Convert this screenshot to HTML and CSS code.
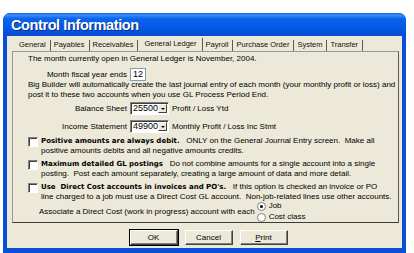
FILE: index.html
```html
<!DOCTYPE html>
<html lang="en">
<head>
    <meta charset="UTF-8">
    <title>Control Information</title>
    <link rel="stylesheet" href="styles.css">
</head>
<body>
    <div class="window">
        <div class="titlebar">Control Information</div>
        <div class="frame">
            <!-- Tabs -->
            <div class="tabs">
                <span class="tab">General</span>
                <span class="tab">Payables</span>
                <span class="tab">Receivables</span>
                <span class="tab active">General Ledger</span>
                <span class="tab">Payroll</span>
                <span class="tab">Purchase Order</span>
                <span class="tab">System</span>
                <span class="tab">Transfer</span>
            </div>

            <!-- General Ledger panel -->
            <div class="panel">
                <p class="line">The month currently open in General Ledger is November, 2004.</p>

                <div class="field fiscal">
                    <span class="label">Month fiscal year ends</span>
                    <span class="textbox small">12</span>
                </div>

                <p class="line">Big Builder will automatically create the last journal entry of each month (your monthly profit or loss) and<br>post it to these two accounts when you use GL Process Period End.</p>

                <div class="field balance">
                    <span class="label">Balance Sheet</span>
                    <span class="combo"><span class="combo-value">25500</span><span class="combo-btn"></span></span>
                    <span class="after">Profit / Loss Ytd</span>
                </div>

                <div class="field income">
                    <span class="label">Income Statement</span>
                    <span class="combo"><span class="combo-value">49900</span><span class="combo-btn"></span></span>
                    <span class="after">Monthly Profit / Loss Inc Stmt</span>
                </div>

                <div class="option first">
                    <span class="checkbox"></span>
                    <p class="option-text"><b>Positive amounts are always debit.</b>&nbsp;&nbsp; ONLY on the General Journal Entry screen.&nbsp; Make all<br>positive amounts debits and all negative amounts credits.</p>
                </div>

                <div class="option">
                    <span class="checkbox"></span>
                    <p class="option-text"><b>Maximum detailed GL postings</b>&nbsp;&nbsp; Do not combine amounts for a single account into a single<br>posting.&nbsp; Post each amount separately, creating a large amount of data and more detail.</p>
                </div>

                <div class="option">
                    <span class="checkbox"></span>
                    <p class="option-text"><b>Use&nbsp; Direct Cost accounts in invoices and PO's.</b>&nbsp;&nbsp; If this option is checked an invoice or PO<br>line charged to a job must use a Direct Cost GL account.&nbsp; Non-job-related lines use other accounts.</p>
                </div>

                <div class="associate">
                    <span class="associate-text">Associate a Direct Cost (work in progress) account with each</span>
                    <div class="radios">
                        <label class="radio-row"><span class="radio checked"></span>Job</label>
                        <label class="radio-row"><span class="radio"></span>Cost class</label>
                    </div>
                </div>
            </div>

            <!-- Dialog buttons -->
            <div class="buttons">
                <button class="btn default">OK</button>
                <button class="btn">Cancel</button>
                <button class="btn"><u>P</u>rint</button>
            </div>
        </div>
    </div>
</body>
</html>
```

FILE: styles.css
```css
body {
    margin: 0;
    background: white;
    font-family: "Liberation Sans", Arial, sans-serif;
    font-size: 8px;
    color: black;
    overflow: hidden;
}

.window {
    margin: 13px 0 0 3px;
    width: 403px;
    height: 240px;
    border-radius: 7px 7px 0 0;
    background: #0a4fd8;
    display: flex;
    flex-direction: column;
    box-sizing: border-box;
    padding: 0 4px 5px 4px;
}

.titlebar {
    height: 23px;
    margin: 0 -4px;
    padding-left: 8px;
    border-radius: 7px 7px 0 0;
    background: linear-gradient(to bottom, #0a5ce8 0%, #3d8ef9 8%, #0b63ec 25%, #0458e4 70%, #0a4ad0 100%);
    color: white;
    font-size: 14.5px;
    font-weight: bold;
    letter-spacing: -0.4px;
    line-height: 24px;
    text-shadow: 1px 1px 0 #0a2a80;
}

.frame {
    flex: 1;
    background: #ece9d8;
    display: flex;
    flex-direction: column;
    padding: 2px 3px 0 5px;
}

.tabs {
    display: flex;
    height: 13px;
    padding-left: 4px;
    align-items: flex-end;
}

.tab {
    padding: 0 4px 1px 3px;
    border-right: 1px solid #5a5a5a;
    line-height: 10px;
    font-size: 7.5px;
    color: #111;
}

.tab.active {
    padding: 0 5px 2px 6px;
    line-height: 11px;
}

.panel {
    height: 172px;
    border: 1px solid #919b9c;
    border-bottom-color: #3c3c3c;
    border-right-color: #5a5a5a;
    padding: 2px 0 0 15px;
    box-sizing: border-box;
}

.line {
    margin: 0;
    line-height: 10px;
}

.field {
    display: flex;
    align-items: center;
    gap: 3px;
}

.field .label {
    width: 99px;
    text-align: right;
}

.fiscal {
    margin: 4px 0 -1px;
}

.balance {
    margin: 2px 0 0;
}

.income {
    margin: 5px 0 0;
}

.textbox {
    background: white;
    border: 1px solid;
    border-color: #7f9db9;
    height: 11px;
    line-height: 11px;
    padding: 0 2px;
    font-size: 9px;
}

.textbox.small {
    width: 10px;
}

.combo {
    display: flex;
    width: 37px;
    height: 11px;
    background: white;
    border: 1px solid;
    border-color: #808080 #fff #fff #808080;
    box-shadow: inset 1px 1px 0 #404040;
}

.combo-value {
    flex: 1;
    padding-left: 2px;
    line-height: 11px;
    font-size: 9px;
}

.combo-btn {
    width: 10px;
    margin: 1px 1px 1px 0;
    background: #ece9d8;
    border: 1px solid;
    border-color: #fff #404040 #404040 #fff;
    box-sizing: border-box;
    position: relative;
}

.combo-btn::after {
    content: "";
    position: absolute;
    left: 2px;
    top: 3px;
    border-left: 2px solid transparent;
    border-right: 2px solid transparent;
    border-top: 2px solid black;
}

.option {
    display: flex;
    align-items: flex-start;
    margin-top: 3px;
}

.option.first {
    margin-top: 3px;
}

.checkbox {
    width: 8px;
    height: 8px;
    margin: 1px 3px 0 0;
    background: white;
    border: 1px solid;
    border-color: #808080 #fff #fff #808080;
    box-shadow: inset 1px 1px 0 #404040;
    flex: none;
}

.option-text {
    margin: 0;
    line-height: 10px;
}

.option-text b {
    font-family: "DejaVu Sans", Verdana, sans-serif;
    font-size: 7px;
}

.associate {
    display: flex;
    align-items: center;
    margin: -1px 0 0 11px;
}

.radios {
    display: flex;
    flex-direction: column;
    gap: 1px;
    margin-left: 2px;
}

.radio-row {
    display: flex;
    align-items: center;
    line-height: 10px;
    gap: 3px;
}

.radio {
    width: 7px;
    height: 7px;
    border-radius: 50%;
    background: white;
    border: 1px solid #808080;
    display: inline-block;
    position: relative;
}

.radio.checked::after {
    content: "";
    position: absolute;
    left: 2px;
    top: 2px;
    width: 3px;
    height: 3px;
    border-radius: 50%;
    background: black;
}

.buttons {
    display: flex;
    justify-content: center;
    gap: 7px;
    padding: 7px 0 0 0;
    margin-left: 6px;
}

.btn {
    width: 48px;
    height: 15px;
    padding: 0;
    font-family: "Liberation Sans", Arial, sans-serif;
    font-size: 8px;
    background: #ece9d8;
    border: 1px solid;
    border-color: #fff #404040 #404040 #fff;
    box-shadow: inset -1px -1px 0 #808080;
    color: black;
}

.btn.default {
    outline: 1px solid black;
}
```
